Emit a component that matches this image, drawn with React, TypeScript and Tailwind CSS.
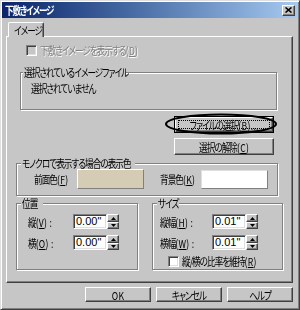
import React from "react";

const raised =
  "bg-[#c6c6c6] border border-t-white border-l-white border-r-[#404040] border-b-[#404040] shadow-[inset_-1px_-1px_0_#808080]";
const sunken =
  "border border-t-[#808080] border-l-[#808080] border-r-white border-b-white shadow-[inset_1px_1px_0_#404040,inset_-1px_-1px_0_#dfdfdf]";
const groupBox = "border border-[#808080] shadow-[inset_1px_1px_0_#fff,1px_1px_0_#fff]";

function T({ children, center }: { children: React.ReactNode; center?: boolean }) {
  return (
    <span className={`inline-block scale-x-[0.78] ${center ? "origin-center" : "origin-left"}`}>{children}</span>
  );
}

function M({ c, tail }: { c: string; tail?: string }) {
  return (
    <span className="tracking-[0.4px]">
      (<span className="underline underline-offset-[1px]">{c}</span>){tail}
    </span>
  );
}

function Arrow({ up }: { up?: boolean }) {
  return (
    <svg width="5" height="3" viewBox="0 0 5 3">
      <path d={up ? "M2.5 0L5 3H0z" : "M0 0h5L2.5 3z"} fill="#000" />
    </svg>
  );
}

function Spin({ value }: { value: string }) {
  return (
    <div className="flex h-[15px]">
      <div
        className={`${sunken} w-[34px] h-[15px] bg-white pl-[2px] font-['Liberation_Sans',sans-serif] text-[11px] leading-[13px] tracking-normal`}
      >
        {value}
      </div>
      <div className="flex flex-col w-[12px] h-[15px]">
        <div className={`${raised} h-[8px] flex items-center justify-center`}>
          <Arrow up />
        </div>
        <div className={`${raised} h-[7px] flex items-center justify-center`}>
          <Arrow />
        </div>
      </div>
    </div>
  );
}

function Btn({ children, w, h, focus }: { children: React.ReactNode; w: string; h: string; focus?: boolean }) {
  return (
    <div className={`${w} ${h} ${focus ? "border border-black" : ""}`}>
      <div className={`${raised} w-full h-full flex items-center justify-center p-[2px]`}>
        <div
          className={`w-full h-full flex items-center justify-center ${
            focus ? "border border-dotted border-black" : ""
          }`}
        >
          <T center>{children}</T>
        </div>
      </div>
    </div>
  );
}

export default function App() {
  return (
    <div className="relative w-[300px] h-[310px] bg-[#c6c6c6] border border-t-[#dfdfdf] border-l-[#dfdfdf] border-r-[#404040] border-b-[#404040] shadow-[inset_1px_1px_0_#fff,inset_-1px_-1px_0_#808080] p-[1px] font-['Noto_Sans_CJK_JP',sans-serif] text-[11px] leading-[12px] tracking-[-1.2px] whitespace-nowrap text-black [font-feature-settings:'palt'] overflow-hidden">
      {/* Title bar */}
      <div className="h-[16px] flex items-center justify-between bg-linear-to-r from-[#0a246a] to-[#a6caf0]">
        <span className="pl-[3px] text-white font-bold tracking-[-1.5px]">
          <T>下敷きイメージ</T>
        </span>
        <div className={`${raised} w-[13px] h-[11px] mr-[3px] flex items-center justify-center`}>
          <svg width="7" height="6" viewBox="0 0 7 6">
            <path d="M0.5 0.5L6.5 5.5M6.5 0.5L0.5 5.5" stroke="#000" strokeWidth="1.6" />
          </svg>
        </div>
      </div>

      {/* Tab */}
      <div className="mt-[4px] pl-[6px] flex">
        <div className="relative z-10 -mb-[1px] w-[36px] h-[15px] bg-[#c6c6c6] border-t border-l border-r border-t-white border-l-white border-r-[#404040] rounded-t-[2px] shadow-[inset_-1px_0_0_#808080] pl-[5px] pt-[1px]">
          <T>イメージ</T>
        </div>
      </div>

      {/* Panel */}
      <div className="ml-[4px] w-[287px] h-[247px] border border-t-white border-l-white border-r-[#404040] border-b-[#404040] shadow-[inset_-1px_-1px_0_#808080] flex flex-col">
        {/* disabled checkbox */}
        <div className="mt-[7px] ml-[19px] h-[12px] flex items-center gap-[3px]">
          <div className={`${sunken} w-[11px] h-[11px] bg-[#c6c6c6]`} />
          <span className="text-[#808080] [text-shadow:1px_1px_0_#fff]">
            <T>
              下敷きイメージを表示する<M c="D" />
            </T>
          </span>
        </div>

        {/* selected image file group */}
        <fieldset className={`${groupBox} mt-[10px] ml-[13px] w-[257px] px-[2px]`}>
          <legend className="bg-[#c6c6c6] w-[103px] px-[1px] leading-[12px] overflow-visible">
            <T>選択されているイメージファイル</T>
          </legend>
          <div className="pl-[8px] pt-[4px] pb-[15px]">
            <T>選択されていません</T>
          </div>
        </fieldset>

        {/* buttons */}
        <div className="mt-[6px] pr-[18px] flex flex-col items-end gap-[5px]">
          <Btn w="w-[100px]" h="h-[17px]" focus>
            ファイルの選択<M c="B" tail="..." />
          </Btn>
          <Btn w="w-[100px]" h="h-[17px]">
            選択の解除<M c="C" />
          </Btn>
        </div>

        {/* monochrome colours */}
        <fieldset className={`${groupBox} mt-[2px] ml-[9px] w-[262px] px-[4px]`}>
          <legend className="bg-[#c6c6c6] w-[114px] px-[1px] leading-[12px] overflow-visible">
            <T>モノクロで表示する場合の表示色</T>
          </legend>
          <div className="flex items-center pl-[13px] pb-[6px]">
            <span className="w-[43px]">
              <T>
                前面色<M c="F" />
              </T>
            </span>
            <div className="w-[67px] h-[20px] bg-[#d5ccb6] border border-t-white border-l-white border-r-[#808080] border-b-[#808080]" />
            <span className="w-[41px] ml-[16px]">
              <T>
                背景色<M c="K" />
              </T>
            </span>
            <div className="w-[67px] h-[19px] bg-white border border-t-[#dfdfdf] border-l-[#dfdfdf] border-r-[#808080] border-b-[#808080]" />
          </div>
        </fieldset>

        {/* position and size */}
        <div className="mt-[1px] ml-[9px] flex gap-[14px] items-stretch">
          <fieldset className={`${groupBox} w-[122px] px-[4px]`}>
            <legend className="bg-[#c6c6c6] w-[22px] px-[1px] leading-[12px] overflow-visible">
              <T>位置</T>
            </legend>
            <div className="flex flex-col gap-[6px] pt-[5px] pl-[7px]">
              <div className="flex items-center">
                <span className="w-[45px]">
                  <T>
                    縦<M c="V" tail=" :" />
                  </T>
                </span>
                <Spin value={'0.00"'} />
              </div>
              <div className="flex items-center">
                <span className="w-[45px]">
                  <T>
                    横<M c="O" tail=" :" />
                  </T>
                </span>
                <Spin value={'0.00"'} />
              </div>
            </div>
          </fieldset>
          <fieldset className={`${groupBox} w-[126px] px-[4px]`}>
            <legend className="bg-[#c6c6c6] w-[22px] px-[1px] leading-[12px] overflow-visible">
              <T>サイズ</T>
            </legend>
            <div className="flex flex-col gap-[6px] pt-[5px] pl-[3px]">
              <div className="flex items-center">
                <span className="w-[52px]">
                  <T>
                    縦幅<M c="H" tail=" :" />
                  </T>
                </span>
                <Spin value={'0.01"'} />
              </div>
              <div className="flex items-center">
                <span className="w-[52px]">
                  <T>
                    横幅<M c="W" tail=" :" />
                  </T>
                </span>
                <Spin value={'0.01"'} />
              </div>
              <div className="flex items-center gap-[3px] pl-[8px] -mt-[1px] pb-[2px]">
                <div className={`${sunken} w-[11px] h-[11px] bg-white`} />
                <span>
                  <T>
                    縦/横の比率を維持<M c="R" />
                  </T>
                </span>
              </div>
            </div>
          </fieldset>
        </div>
      </div>

      {/* bottom buttons */}
      <div className="mt-[4px] pr-[5px] flex justify-end gap-[5px]">
        <Btn w="w-[66px]" h="h-[15px]">
          <span className="tracking-[0.5px]">OK</span>
        </Btn>
        <Btn w="w-[66px]" h="h-[15px]">キャンセル</Btn>
        <Btn w="w-[66px]" h="h-[15px]">ヘルプ</Btn>
      </div>

      {/* annotation ellipse */}
      <svg className="absolute left-[163px] top-[112px]" width="114" height="22" viewBox="0 0 114 22">
        <ellipse cx="57" cy="11" rx="55" ry="9.5" fill="none" stroke="#000" strokeWidth="2" />
      </svg>
    </div>
  );
}
